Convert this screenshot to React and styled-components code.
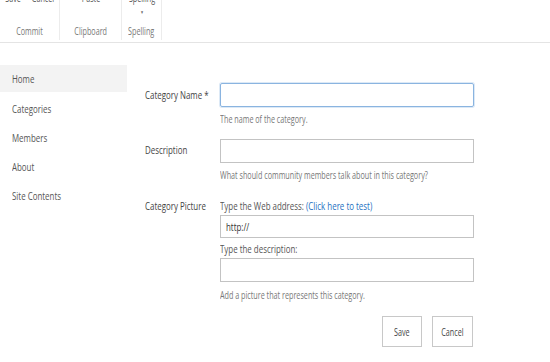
import React from "react";
import styled, { createGlobalStyle, css } from "styled-components";

const Global = createGlobalStyle`
  html, body {
    margin: 0;
    padding: 0;
    background: #ffffff;
  }
  body {
    font-family: "Open Sans", "Liberation Sans", sans-serif;
    font-size: 11px;
    color: #444444;
    overflow: hidden;
  }
`;

// the source screenshot is horizontally squeezed, so text is narrowed the same way
const narrow = css`
  white-space: nowrap;
  transform: scaleX(0.72);
  transform-origin: ${(p) => (p.$center ? "center" : "left")} center;
`;

const Page = styled.div`
  width: 550px;
  height: 362px;
  overflow: hidden;
`;

const Ribbon = styled.div`
  height: 42px;
  border-bottom: 1px solid #e4e4e4;
  display: flex;
  overflow: hidden;
`;

const Group = styled.div`
  box-sizing: border-box;
  width: ${(p) => p.$w}px;
  height: 40px;
  border-right: 1px solid #ececec;
  display: flex;
  flex-direction: column;
  align-items: center;
`;

const GroupButtons = styled.div`
  display: flex;
  justify-content: center;
  margin-top: -8px;
  height: 33px;
  color: #555;
  font-size: 10px;
`;

const RibbonItem = styled.div`
  display: flex;
  flex-direction: column;
  align-items: center;
  line-height: 12px;
  width: ${(p) => p.$w}px;
  ${narrow}
`;

const Caret = styled.span`
  font-size: 5px;
  line-height: 6px;
  margin-top: 5px;
  color: #666;
`;

const GroupLabel = styled.div`
  font-size: 10px;
  color: #777;
  line-height: 12px;
  ${narrow}
`;

const Body = styled.div`
  display: flex;
`;

const Nav = styled.nav`
  width: 127px;
  padding-top: 22px;
  display: flex;
  flex-direction: column;
`;

const NavItem = styled.div`
  height: ${(p) => (p.$active ? 27 : 29)}px;
  margin-bottom: ${(p) => (p.$active ? 2 : 0)}px;
  line-height: ${(p) => (p.$active ? 27 : 29)}px;
  padding-left: 12px;
  background: ${(p) => (p.$active ? "#f3f3f3" : "transparent")};
`;

const NavText = styled.div`
  font-size: 11px;
  color: #555;
  ${narrow}
`;

const Form = styled.div`
  margin-left: 18px;
  padding-top: 40px;
  width: 329px;
`;

const Row = styled.div`
  display: grid;
  grid-template-columns: 75px 254px;
  margin-bottom: ${(p) => p.$mb || 0}px;
`;

const Label = styled.div`
  font-size: 11px;
  color: #444;
  line-height: 14px;
  padding-top: ${(p) => p.$pt || 0}px;
  ${narrow}
`;

const Field = styled.div`
  display: flex;
  flex-direction: column;
`;

const Input = styled.div`
  box-sizing: border-box;
  height: ${(p) => p.$h || 24}px;
  border: 1px solid ${(p) => (p.$focus ? "#8ab4e0" : "#c3c3c3")};
  box-shadow: ${(p) => (p.$focus ? "0 0 0 1px #dce9f6" : "none")};
  border-radius: ${(p) => (p.$focus ? 2 : 0)}px;
  padding-left: 5px;
  line-height: ${(p) => (p.$h || 24) - 2}px;
`;

const InputText = styled.div`
  font-size: 11px;
  color: #333;
  ${narrow}
`;

const Hint = styled.div`
  font-size: 10px;
  color: #777;
  line-height: 14px;
  margin-top: ${(p) => p.$mt || 0}px;
  ${narrow}
`;

const Prompt = styled.div`
  font-size: 11px;
  color: #555;
  line-height: 14px;
  margin-top: ${(p) => p.$mt || 0}px;
  margin-bottom: 2px;
  ${narrow}
`;

const Link = styled.span`
  color: #1d6fbf;
`;

const Actions = styled.div`
  display: flex;
  justify-content: flex-end;
  gap: 10px;
  padding-right: 1px;
`;

const Button = styled.div`
  box-sizing: border-box;
  width: ${(p) => p.$w}px;
  height: 31px;
  border: 1px solid #c8c8c8;
  display: flex;
  align-items: center;
  justify-content: center;
`;

const ButtonText = styled.span`
  display: inline-block;
  font-size: 10px;
  color: #444;
  ${narrow}
`;

export default function App() {
  return (
    <Page>
      <Global />
      <Ribbon>
        <Group $w={60}>
          <GroupButtons>
            <RibbonItem $center $w={26}>Save</RibbonItem>
            <RibbonItem $center $w={34}>Cancel</RibbonItem>
          </GroupButtons>
          <GroupLabel $center>Commit</GroupLabel>
        </Group>
        <Group $w={62}>
          <GroupButtons>
            <RibbonItem $center $w={36}>Paste</RibbonItem>
          </GroupButtons>
          <GroupLabel $center>Clipboard</GroupLabel>
        </Group>
        <Group $w={40}>
          <GroupButtons>
            <RibbonItem $center $w={38}>
              Spelling
              <Caret>▼</Caret>
            </RibbonItem>
          </GroupButtons>
          <GroupLabel $center>Spelling</GroupLabel>
        </Group>
      </Ribbon>
      <Body>
        <Nav>
          <NavItem $active><NavText>Home</NavText></NavItem>
          <NavItem><NavText>Categories</NavText></NavItem>
          <NavItem><NavText>Members</NavText></NavItem>
          <NavItem><NavText>About</NavText></NavItem>
          <NavItem><NavText>Site Contents</NavText></NavItem>
        </Nav>
        <Form>
          <Row $mb={13}>
            <Label $pt={5}>Category Name *</Label>
            <Field>
              <Input $focus />
              <Hint $mt={5}>The name of the category.</Hint>
            </Field>
          </Row>
          <Row $mb={17}>
            <Label $pt={4}>Description</Label>
            <Field>
              <Input />
              <Hint $mt={5}>What should community members talk about in this category?</Hint>
            </Field>
          </Row>
          <Row $mb={14}>
            <Label>Category Picture</Label>
            <Field>
              <Prompt>
                Type the Web address: <Link>(Click here to test)</Link>
              </Prompt>
              <Input $h={23}><InputText>http://</InputText></Input>
              <Prompt $mt={4}>Type the description:</Prompt>
              <Input $h={24} />
              <Hint $mt={6}>Add a picture that represents this category.</Hint>
            </Field>
          </Row>
          <Actions>
            <Button $w={40}><ButtonText $center>Save</ButtonText></Button>
            <Button $w={41}><ButtonText $center>Cancel</ButtonText></Button>
          </Actions>
        </Form>
      </Body>
    </Page>
  );
}
